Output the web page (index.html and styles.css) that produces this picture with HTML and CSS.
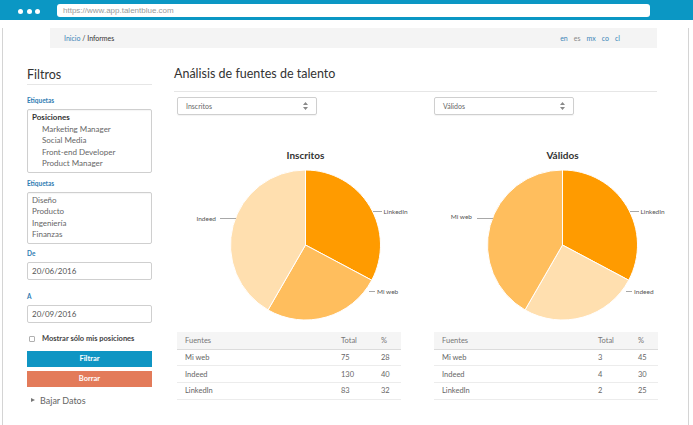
FILE: index.html
```html
<!DOCTYPE html>
<html lang="es">
<head>
<meta charset="utf-8">
<title>Informes</title>
<link rel="stylesheet" href="styles.css">
</head>
<body>
<div class="chrome">
  <div class="dots"><span></span><span></span><span></span></div>
  <div class="url">https://www.app.talentblue.com</div>
</div>
<div class="window">
  <div class="crumbs">
    <span><a class="link">Inicio</a> / Informes</span>
    <span class="langs"><a class="link">en</a><span class="muted">es</span><a class="link">mx</a><a class="link">co</a><a class="link">cl</a></span>
  </div>
  <div class="content">
    <aside class="sidebar">
      <h2 class="side-title">Filtros</h2>
      <div class="label first">Etiquetas</div>
      <div class="listbox">
        <div class="group">Posiciones</div>
        <div class="opt indent">Marketing Manager</div>
        <div class="opt indent">Social Media</div>
        <div class="opt indent">Front-end Developer</div>
        <div class="opt indent">Product Manager</div>
      </div>
      <div class="label second">Etiquetas</div>
      <div class="listbox">
        <div class="opt">Diseño</div>
        <div class="opt">Producto</div>
        <div class="opt">Ingeniería</div>
        <div class="opt">Finanzas</div>
      </div>
      <div class="label date-de">De</div>
      <div class="input">20/06/2016</div>
      <div class="label date-a">A</div>
      <div class="input">20/09/2016</div>
      <label class="check"><span class="box"></span>Mostrar sólo mis posiciones</label>
      <button class="btn btn-blue">Filtrar</button>
      <button class="btn btn-red">Borrar</button>
      <div class="download"><span class="tri"></span>Bajar Datos</div>
    </aside>
    <main class="main">
      <h1 class="main-title">Análisis de fuentes de talento</h1>
      <div class="cols">
        <section class="col">
          <div class="select">Inscritos
            <svg class="arrows" width="5" height="8" viewBox="0 0 5 8"><path d="M2.5 0 L5 3 L0 3 Z M0 5 L5 5 L2.5 8 Z" fill="#8a8a8a"/></svg>
          </div>
          <div class="chart-title">Inscritos</div>
          <svg class="pie" width="257" height="164" viewBox="0 0 257 164">
            <path d="M128.5 84 L128.5 9 A75 75 0 0 1 194.72 119.21 Z" fill="#ff9b00" stroke="#fff" stroke-width="1"/>
            <path d="M128.5 84 L194.72 119.21 A75 75 0 0 1 91 148.95 Z" fill="#ffbe5d" stroke="#fff" stroke-width="1"/>
            <path d="M128.5 84 L91 148.95 A75 75 0 0 1 128.5 9 Z" fill="#ffdfaf" stroke="#fff" stroke-width="1"/>
            <path d="M196 50.5 H205 M192 130.5 H198 M43 57.5 H59" stroke="#a8a8a8" stroke-width="1"/>
            <text x="206.5" y="52.8" class="plabel">LinkedIn</text>
            <text x="200" y="132.8" class="plabel">Mi web</text>
            <text x="39" y="59.8" class="plabel" text-anchor="end">Indeed</text>
          </svg>
          <table class="tbl">
            <colgroup><col class="c1"><col class="c2"><col class="c3"></colgroup>
            <thead><tr><th>Fuentes</th><th>Total</th><th>%</th></tr></thead>
            <tbody>
              <tr><td>Mi web</td><td>75</td><td>28</td></tr>
              <tr><td>Indeed</td><td>130</td><td>40</td></tr>
              <tr><td>LinkedIn</td><td>83</td><td>32</td></tr>
            </tbody>
          </table>
        </section>
        <section class="col">
          <div class="select">Válidos
            <svg class="arrows" width="5" height="8" viewBox="0 0 5 8"><path d="M2.5 0 L5 3 L0 3 Z M0 5 L5 5 L2.5 8 Z" fill="#8a8a8a"/></svg>
          </div>
          <div class="chart-title">Válidos</div>
          <svg class="pie" width="257" height="164" viewBox="0 0 257 164">
            <path d="M128.5 84 L128.5 9 A75 75 0 0 1 194.72 119.21 Z" fill="#ff9b00" stroke="#fff" stroke-width="1"/>
            <path d="M128.5 84 L194.72 119.21 A75 75 0 0 1 91 148.95 Z" fill="#ffdfaf" stroke="#fff" stroke-width="1"/>
            <path d="M128.5 84 L91 148.95 A75 75 0 0 1 128.5 9 Z" fill="#ffbe5d" stroke="#fff" stroke-width="1"/>
            <path d="M196 50.5 H205 M192 130.5 H198 M43 57.5 H59" stroke="#a8a8a8" stroke-width="1"/>
            <text x="206.5" y="52.8" class="plabel">LinkedIn</text>
            <text x="200" y="132.8" class="plabel">Indeed</text>
            <text x="38" y="57.5" class="plabel" text-anchor="end">Mi web</text>
          </svg>
          <table class="tbl">
            <colgroup><col class="c1"><col class="c2"><col class="c3"></colgroup>
            <thead><tr><th>Fuentes</th><th>Total</th><th>%</th></tr></thead>
            <tbody>
              <tr><td>Mi web</td><td>3</td><td>45</td></tr>
              <tr><td>Indeed</td><td>4</td><td>30</td></tr>
              <tr><td>LinkedIn</td><td>2</td><td>25</td></tr>
            </tbody>
          </table>
        </section>
      </div>
    </main>
  </div>
</div>
</body>
</html>
```
FILE: styles.css
```css
* { box-sizing: border-box; }
html, body { margin: 0; padding: 0; background: #fff; }
body { font-family: Lato, "Open Sans", sans-serif; color: #333; width: 693px; height: 425px; overflow: hidden; }

.chrome { height: 20px; background: #0b97c4; display: flex; padding: 4px 0 0 18px; }
.dots { display: flex; gap: 3.5px; height: 13px; align-items: center; padding-top: 1px; }
.dots span { width: 5px; height: 5px; border-radius: 50%; background: #fff; display: block; }
.url { margin-left: 17px; width: 593px; height: 13px; background: #fff; border-radius: 3px; font-family: "Liberation Sans", Arial, sans-serif; font-size: 8px; line-height: 13px; color: #9a9a9a; padding-left: 6px; }

.window { margin-left: 2px; width: 687px; height: 404px; border: 1px solid #d4d4d4; border-top: 0; }

.crumbs { margin: 8px 0 0 47px; width: 607px; height: 20px; background: #f4f4f4; display: flex; justify-content: space-between; align-items: center; padding: 0 37px 0 14px; font-size: 7px; color: #333; }
.link { color: #3a86b8; }
.muted { color: #888; }
.langs { display: flex; gap: 6px; }

.content { display: flex; }
.sidebar { margin-left: 24px; width: 125px; display: flex; flex-direction: column; }
.side-title { margin: 20px 0 0; font-size: 12.5px; font-weight: 400; line-height: 14px; padding-bottom: 2px; border-bottom: 1px solid #e6e6e6; color: #333; }
.label { font-size: 6.5px; font-weight: 700; color: #2f7db3; line-height: 8px; margin-bottom: 4px; }
.label.first { margin-top: 12px; }
.label.second { margin-top: 7px; }
.label.date-de { margin-top: 6px; }
.label.date-a { margin-top: 13px; }
.listbox { border: 1px solid #cfcfcf; border-radius: 2px; padding: 2px 4px 2px; font-size: 8px; line-height: 11.5px; box-shadow: inset 0 1px 1px rgba(0,0,0,0.04); }
.group { font-weight: 700; color: #333; }
.opt { color: #666; }
.opt.indent { padding-left: 10px; }
.input { height: 18px; border: 1px solid #cfcfcf; border-radius: 2px; font-size: 8px; line-height: 16px; padding-left: 4px; color: #555; }
.check { margin-top: 11px; height: 10px; display: flex; align-items: center; font-size: 7.5px; font-weight: 700; color: #444; padding-left: 2px; }
.box { width: 6px; height: 6px; border: 1px solid #b0b0b0; border-radius: 1px; margin-right: 7px; }
.btn { display: block; width: 125px; height: 16px; border: 0; padding: 0; font-family: Lato, sans-serif; font-size: 7.5px; font-weight: 700; color: #fff; }
.btn-blue { margin-top: 7px; background: #0f95c3; }
.btn-red { margin-top: 4px; background: #e37b5a; }
.download { margin-top: 8px; font-size: 9px; line-height: 11px; color: #666; display: flex; align-items: center; padding-left: 4px; }
.tri { width: 0; height: 0; border-left: 4px solid #777; border-top: 2.5px solid transparent; border-bottom: 2.5px solid transparent; margin-right: 5px; }

.main { margin-left: 22px; width: 483px; }
.main-title { margin: 19px 0 0; font-size: 12.5px; font-weight: 400; line-height: 14px; padding-bottom: 10px; border-bottom: 1px solid #e6e6e6; color: #333; }
.cols { display: grid; grid-template-columns: 257px 257px; padding-left: 3px; }
.col { display: flex; flex-direction: column; }
.select { margin-top: 5px; width: 140px; height: 18px; border: 1px solid #cfcfcf; border-radius: 2px; box-shadow: 0 1px 1px rgba(0,0,0,0.05); display: flex; align-items: center; justify-content: space-between; padding: 0 8px 0 8px; font-size: 7px; color: #666; }
.chart-title { margin-top: 34px; width: 257px; text-align: center; font-size: 10px; font-weight: 700; line-height: 12px; color: #333; }
.pie { display: block; }
.plabel { font-family: Lato, sans-serif; font-size: 6.5px; fill: #555; }
.tbl { margin-top: 7px; width: 224px; border-collapse: collapse; table-layout: fixed; font-size: 7.5px; color: #666; }
.c1 { width: 164px; }
.c2 { width: 40px; }
.c3 { width: 20px; }
.tbl th { background: #f5f5f5; font-weight: 400; text-align: left; height: 17px; padding: 0; border-bottom: 1px solid #dcdcdc; color: #777; }
.tbl td { height: 16.7px; padding: 0; border-bottom: 1px solid #ececec; }
.tbl th:first-child, .tbl td:first-child { padding-left: 8px; }
```
